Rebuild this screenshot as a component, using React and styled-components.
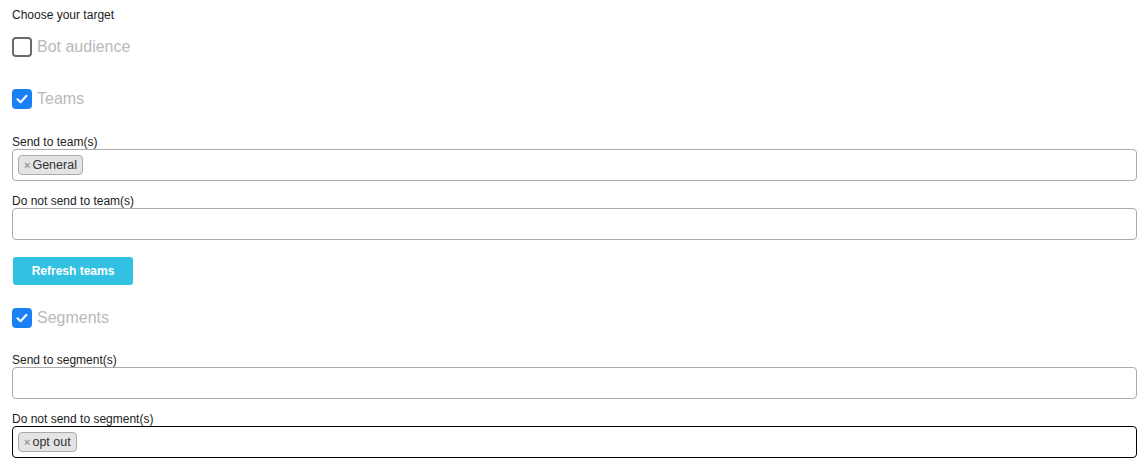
import React from 'react';
import styled, { createGlobalStyle } from 'styled-components';

const GlobalStyle = createGlobalStyle`
  body {
    margin: 0;
    font-family: "Liberation Sans", Arial, sans-serif;
    background: #fff;
    color: #222;
  }
`;

const Page = styled.div`
  padding: 8px 6px 0 12px;
`;

const Title = styled.div`
  font-size: 12px;
  line-height: 14px;
  color: #222;
`;

const CheckRow = styled.label`
  display: flex;
  align-items: center;
  gap: 5px;
  height: 20px;
  margin-top: ${p => p.top}px;
  cursor: pointer;
`;

const Box = styled.span`
  width: 20px;
  height: 20px;
  box-sizing: border-box;
  border-radius: 4px;
  border: ${p => (p.checked ? 'none' : '2px solid #6b6b6b')};
  background: ${p => (p.checked ? '#1a80f6' : '#fff')};
  display: flex;
  align-items: center;
  justify-content: center;
`;

const CheckText = styled.span`
  font-size: 16px;
  color: #b9b9b9;
  line-height: 20px;
`;

const FieldLabel = styled.div`
  font-size: 12px;
  line-height: 13px;
  color: #222;
  margin-top: ${p => p.top}px;
`;

const Select = styled.div`
  height: 32px;
  box-sizing: border-box;
  border: 1px solid ${p => (p.focused ? '#000' : '#aaa')};
  border-radius: 4px;
  display: flex;
  align-items: center;
  padding: 0 5px;
  gap: 4px;
`;

const Tag = styled.span`
  display: inline-flex;
  align-items: center;
  height: 20px;
  box-sizing: border-box;
  padding: 0 5px 0 5px;
  background: #e4e4e4;
  border: 1px solid #aaa;
  border-radius: 4px;
  font-size: 12.5px;
  color: #333;
`;

const Remove = styled.span`
  color: #999;
  font-weight: bold;
  font-size: 11px;
  margin-right: 2px;
`;

const Button = styled.button`
  display: block;
  margin: 17px 0 0 1px;
  width: 120px;
  height: 28px;
  border: none;
  border-radius: 3px;
  background: #33c1e3;
  color: #fff;
  font-family: "Liberation Sans", Arial, sans-serif;
  font-weight: bold;
  font-size: 12px;
  cursor: pointer;
`;

const Gap = styled.div`
  height: ${p => p.h}px;
`;

function Check({ checked, label, top }) {
  return (
    <CheckRow top={top}>
      <Box checked={checked}>
        {checked && (
          <svg width="14" height="14" viewBox="0 0 14 14">
            <path d="M2.5 7.2 L5.6 10.2 L11.5 3.8" fill="none" stroke="#fff" strokeWidth="2" strokeLinecap="round" strokeLinejoin="round" />
          </svg>
        )}
      </Box>
      <CheckText>{label}</CheckText>
    </CheckRow>
  );
}

function MultiSelect({ label, top, tags = [], focused }) {
  return (
    <>
      <FieldLabel top={top}>{label}</FieldLabel>
      <Select focused={focused}>
        {tags.map(t => (
          <Tag key={t}><Remove>×</Remove>{t}</Tag>
        ))}
      </Select>
    </>
  );
}

export default function App() {
  return (
    <Page>
      <GlobalStyle />
      <Title>Choose your target</Title>
      <Check top={15} label="Bot audience" />
      <Check top={32} checked label="Teams" />
      <MultiSelect top={27} label="Send to team(s)" tags={['General']} />
      <MultiSelect top={14} label="Do not send to team(s)" />
      <Button>Refresh teams</Button>
      <Check top={23} checked label="Segments" />
      <MultiSelect top={26} label="Send to segment(s)" />
      <MultiSelect top={14} label="Do not send to segment(s)" tags={['opt out']} focused />
      <Gap h={5} />
    </Page>
  );
}
